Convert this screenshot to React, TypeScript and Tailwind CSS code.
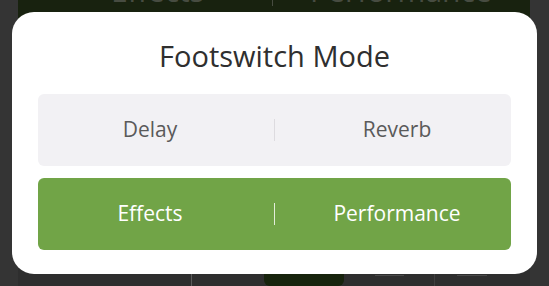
import React from "react";

type Choice = {
  left: string;
  right: string;
  active?: boolean;
};

const choices: Choice[] = [
  { left: "Delay", right: "Reverb" },
  { left: "Effects", right: "Performance", active: true },
];

const ChoiceRow = ({ left, right, active }: Choice) => (
  <button
    className={`flex h-[72px] w-full items-center rounded-[6px] text-[21px] ${
      active ? "bg-[#71a447] text-white" : "bg-[#f2f1f4] text-[#5a5a5a]"
    }`}
  >
    <span className="w-[224px] text-center">{left}</span>
    <span
      className={`ml-[12px] h-[22px] w-px ${active ? "bg-white/80" : "bg-[#dddbdf]"}`}
    />
    <span className="flex-1 pl-[8px] text-center">{right}</span>
  </button>
);

const App = () => {
  return (
    <div
      className="relative h-[286px] w-[549px] overflow-hidden bg-[#343434]"
      style={{ fontFamily: '"Open Sans", "Noto Sans", sans-serif' }}
    >
      {/* page behind the dialog */}
      <div className="ml-[18px] flex h-full w-[512px] flex-col bg-[#2e2e2e]">
        <div className="flex h-[60px] items-start bg-[#18220f] text-[30px] leading-[40px] text-[#474c41]">
          <div className="mt-[-29px] flex items-center">
            <span className="ml-[93px]">Effects</span>
            <span className="ml-[68px] h-[30px] w-px bg-[#474c41]" />
            <span className="ml-[37px]">Performance</span>
            <span className="ml-[40px] text-[18px]">▾</span>
          </div>
        </div>
        <div className="mt-auto flex h-[20px]">
          <span className="ml-[173px] w-px bg-[#5a5a5a]" />
          <span className="ml-[72px] w-[80px] rounded-md bg-[#17230d]" />
          <span className="ml-[31px] mt-[9px] h-px w-[29px] bg-[#4a4a4a]" />
          <span className="ml-[30px] w-px bg-[#3f3f3f]" />
          <span className="ml-[22px] mt-[9px] h-px w-[30px] bg-[#4a4a4a]" />
        </div>
      </div>

      {/* dialog */}
      <div className="absolute left-[12px] top-[12px] flex h-[262px] w-[525px] flex-col rounded-[22px] bg-white px-[26px]">
        <div className="flex h-[82px] items-center justify-center pt-[6px]">
          <h2 className="text-[29px] leading-[36px] text-[#2f2f2f]">Footswitch Mode</h2>
        </div>
        <div className="flex flex-col gap-[12px]">
          {choices.map((c, i) => (
            <ChoiceRow key={i} {...c} />
          ))}
        </div>
      </div>
    </div>
  );
};

export default App;
